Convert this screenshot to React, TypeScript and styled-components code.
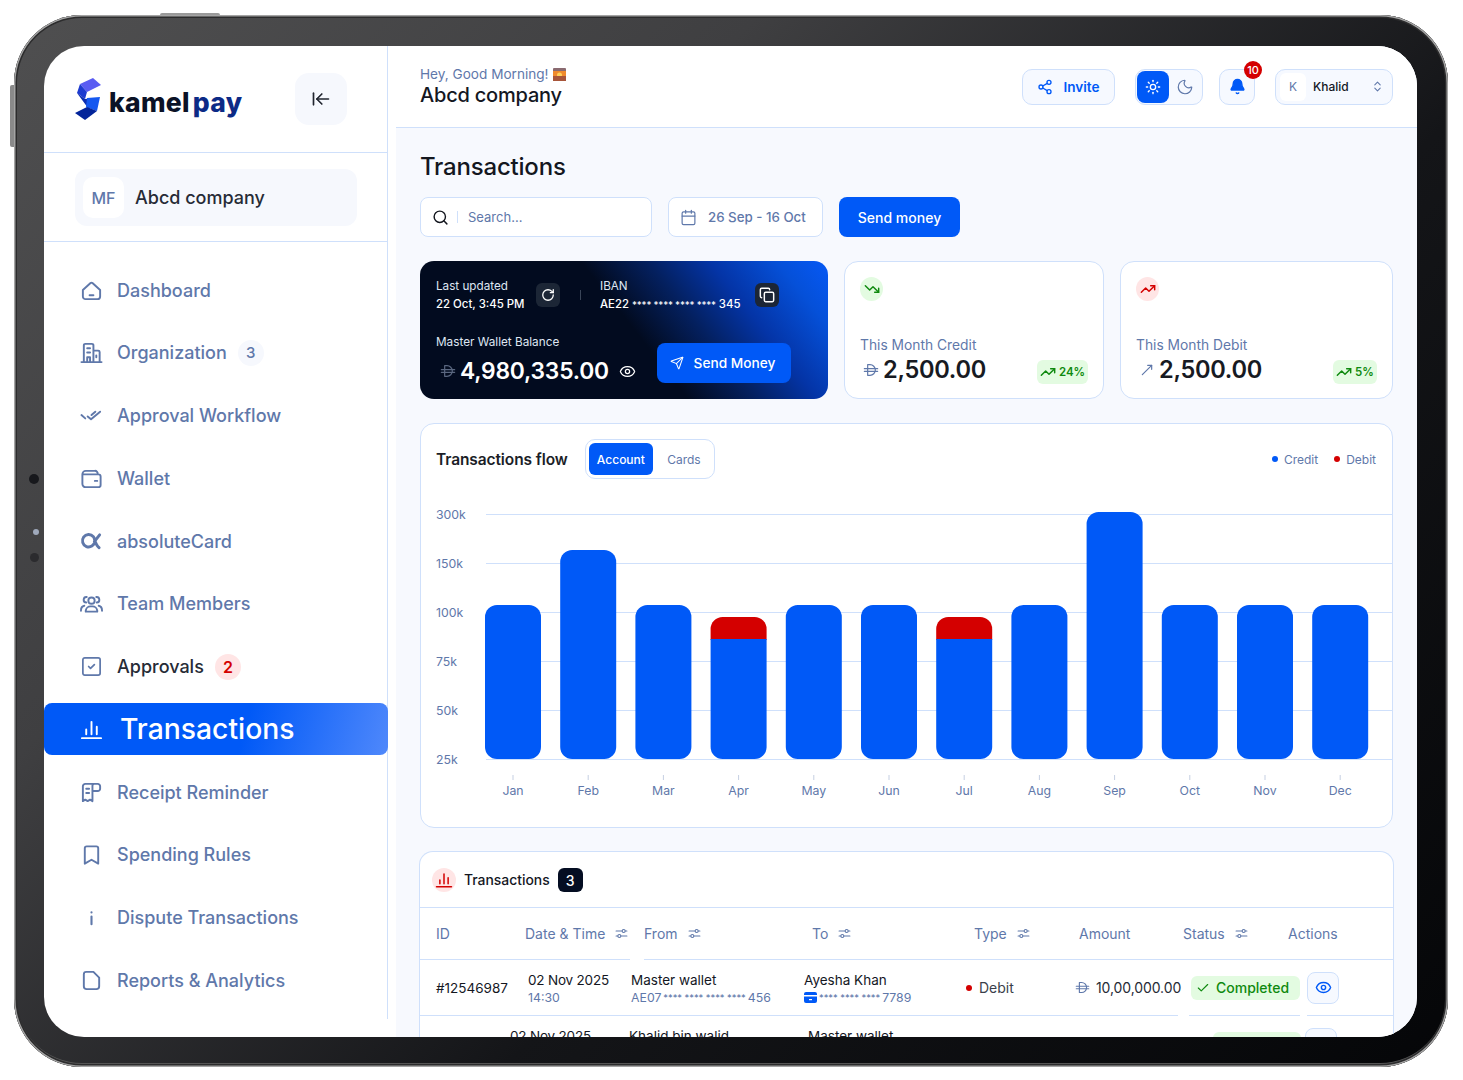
import React from "react";
import styled, { createGlobalStyle } from "styled-components";
import {
  ArrowLeftToLine,
  Bell,
  Bookmark,
  Calendar,
  Check,
  ChevronsUpDown,
  Copy,
  Eye,
  Moon,
  MoveUpRight,
  RotateCw,
  Search,
  Send,
  Share2,
  SquareCheck,
  Sun,
  TrendingDown,
  TrendingUp,
} from "lucide-react";

const muted = "#5f78aa";
const ink = "#14171f";
const blue = "#0059f7";
const red = "#d40000";
const green = "#0f8a0f";
const line = "#cfe0fb";

const GlobalStyle = createGlobalStyle`
  html, body { margin: 0; background: #fff; }
  * { box-sizing: border-box; }
  body { font-family: Inter, "Liberation Sans", sans-serif; color: ${ink}; }
`;

const Page = styled.div`
  width: 1463px;
  height: 1080px;
  padding: 15px 15px 13px 14px;
  overflow: hidden;
`;

const Device = styled.div`
  position: relative;
  width: 1434px;
  height: 1052px;
  padding: 31px 31px 30px 30px;
  border-radius: 68px;
  background: linear-gradient(135deg, #4f4f50 0%, #3f3f41 30%, #141518 62%, #050608 100%);
  box-shadow: inset 0 0 0 1.5px #a4a4a4, inset 0 0 0 3px #2c2c2d, inset 0 -2px 0 2px #555;
`;

const SideKey = styled.span`
  position: absolute;
  left: -4px;
  top: 70px;
  width: 4px;
  height: 62px;
  border-radius: 2px 0 0 2px;
  background: #8a8a8a;
`;

const TopKey = styled.span`
  position: absolute;
  left: 146px;
  top: -2px;
  width: 60px;
  height: 2px;
  border-radius: 2px 2px 0 0;
  background: #9a9a9a;
`;

const Sensor = styled.span<{ $y: number; $size: number; $color: string }>`
  position: absolute;
  left: ${(p) => 20 - p.$size / 2 + (p.$size < 7 ? 2 : 0)}px;
  top: ${(p) => p.$y}px;
  width: ${(p) => p.$size}px;
  height: ${(p) => p.$size}px;
  border-radius: 50%;
  background: ${(p) => p.$color};
`;

const Screen = styled.div`
  display: flex;
  align-items: flex-start;
  width: 1373px;
  height: 991px;
  border-radius: 40px;
  overflow: hidden;
  background: #fff;
`;

const Sidebar = styled.aside`
  flex: none;
  width: 344px;
  height: 973px;
  border-right: 1px solid ${line};
`;

const LogoRow = styled.div`
  display: flex;
  align-items: center;
  justify-content: space-between;
  height: 107px;
  padding: 0 40px 0 31px;
  border-bottom: 1px solid ${line};
`;

const Logo = styled.div`
  display: flex;
  align-items: center;
  gap: 8px;
`;

const LogoWord = styled.span`
  margin-top: 6px;
  font-family: Inter, sans-serif;
  font-size: 26.5px;
  font-weight: 800;
  letter-spacing: 0.3px;
  color: #0b1226;
  span { color: #0c2a86; margin-left: 3px; }
`;

const Collapse = styled.button`
  display: flex;
  align-items: center;
  justify-content: center;
  width: 52px;
  height: 52px;
  border: 0;
  border-radius: 14px;
  background: #f6f8fd;
  color: #20242e;
`;

const CompanyRow = styled.div`
  height: 89px;
  padding: 16px 30px 0 31px;
  border-bottom: 1px solid ${line};
`;

const CompanyBox = styled.div`
  display: flex;
  align-items: center;
  gap: 11px;
  height: 57px;
  padding: 0 8px;
  border-radius: 12px;
  background: #f6f8fd;
  font-size: 18px;
  font-weight: 500;
  color: #262b36;
`;

const CompanyMark = styled.span`
  display: flex;
  align-items: center;
  justify-content: center;
  width: 41px;
  height: 41px;
  border-radius: 10px;
  background: #fff;
  font-size: 16px;
  color: ${muted};
`;

const Nav = styled.nav`
  display: flex;
  flex-direction: column;
  gap: 10.75px;
  padding-top: 22px;
`;

const NavItem = styled.div<{ $active?: boolean; $dark?: boolean }>`
  display: flex;
  align-items: center;
  gap: ${(p) => (p.$active ? 17 : 14)}px;
  height: 52px;
  margin-right: ${(p) => (p.$active ? -1 : 0)}px;
  padding-left: 36px;
  border-radius: 8px;
  font-size: ${(p) => (p.$active ? 28.3 : 18)}px;
  font-weight: 500;
  color: ${(p) => (p.$active ? "#fff" : p.$dark ? "#262b36" : muted)};
  background: ${(p) => (p.$active ? `linear-gradient(105deg, ${blue} 58%, #4f88fb 100%)` : "transparent")};
`;

const NavIcon = styled.span<{ $active?: boolean }>`
  display: flex;
  justify-content: center;
  flex: none;
  width: 23px;
  color: ${(p) => (p.$active ? "#fff" : muted)};
`;

const NavCount = styled.span<{ $alert?: boolean }>`
  display: flex;
  align-items: center;
  justify-content: center;
  width: 26px;
  height: 26px;
  margin-left: -3px;
  border-radius: 50%;
  font-size: ${(p) => (p.$alert ? 16 : 15)}px;
  font-weight: ${(p) => (p.$alert ? 600 : 500)};
  background: ${(p) => (p.$alert ? "#ffe5e5" : "#f6f8fd")};
  color: ${(p) => (p.$alert ? red : muted)};
`;

const Main = styled.main`
  flex: none;
  width: 1021px;
  height: 991px;
  margin-left: 8px;
  overflow: hidden;
  background: #f7f9fe;
`;

const TopBar = styled.header`
  display: flex;
  align-items: center;
  justify-content: space-between;
  height: 82px;
  padding: 0 24px;
  background: #fff;
  border-bottom: 1px solid ${line};
`;

const Greeting = styled.div`
  display: flex;
  align-items: center;
  gap: 4px;
  margin-top: 1px;
  font-size: 13.6px;
  line-height: 17px;
  color: ${muted};
`;

const CompanyTitle = styled.div`
  font-size: 20px;
  font-weight: 500;
  line-height: 25px;
  letter-spacing: -0.2px;
`;

const TopActions = styled.div`
  display: flex;
  align-items: center;
`;

const Pill = styled.div<{ $gap: number; $width: number }>`
  position: relative;
  display: flex;
  align-items: center;
  justify-content: center;
  width: ${(p) => p.$width}px;
  height: 36px;
  margin-left: ${(p) => p.$gap}px;
  border: 1px solid ${line};
  border-radius: 10px;
  background: #f6f9ff;
`;

const InviteLabel = styled.span`
  margin-left: 10px;
  font-size: 13.6px;
  font-weight: 600;
  color: ${blue};
`;

const ThemeOn = styled.span`
  display: flex;
  align-items: center;
  justify-content: center;
  width: 32px;
  height: 32px;
  border-radius: 8px;
  background: ${blue};
  color: #fff;
`;

const ThemeOff = styled.span`
  display: flex;
  align-items: center;
  justify-content: center;
  width: 32px;
  color: ${muted};
`;

const BellBadge = styled.span`
  position: absolute;
  top: -9px;
  right: -8px;
  display: flex;
  align-items: center;
  justify-content: center;
  width: 18px;
  height: 18px;
  border-radius: 50%;
  background: ${red};
  color: #fff;
  font-size: 11px;
  font-weight: 500;
`;

const UserMark = styled.span`
  display: flex;
  align-items: center;
  justify-content: center;
  width: 26px;
  height: 28px;
  margin-left: 4px;
  border-radius: 6px;
  background: #fff;
  font-size: 12px;
  color: ${muted};
`;

const UserName = styled.span`
  flex: 1;
  margin-left: 7px;
  font-size: 12px;
  font-weight: 500;
`;

const UserChevron = styled.span`
  display: flex;
  margin-right: 8px;
  color: ${muted};
`;

const Content = styled.div`
  padding: 24px 24px 0;
`;

const PageTitle = styled.h1`
  margin: 0 0 15px;
  font-size: 24px;
  font-weight: 500;
  line-height: 30px;
  letter-spacing: -0.2px;
`;

const Toolbar = styled.div`
  display: flex;
  gap: 16px;
  margin-bottom: 24px;
`;

const SearchBox = styled.div`
  display: flex;
  align-items: center;
  width: 232px;
  height: 40px;
  padding-left: 11px;
  border: 1px solid ${line};
  border-radius: 8px;
  background: #fff;
  font-size: 13px;
  color: ${muted};
`;

const SearchDivider = styled.span`
  width: 1px;
  height: 12px;
  margin: 0 10px 0 8px;
  background: ${line};
`;

const DateBox = styled.div`
  display: flex;
  align-items: center;
  gap: 11px;
  width: 155px;
  height: 40px;
  padding-left: 11px;
  border: 1px solid ${line};
  border-radius: 8px;
  background: #fff;
  font-size: 13.3px;
  font-weight: 500;
  color: ${muted};
`;

const SendButton = styled.button`
  width: 121px;
  height: 40px;
  border: 0;
  border-radius: 8px;
  background: ${blue};
  color: #fff;
  font: 500 14px Inter, sans-serif;
`;

const StatsRow = styled.section`
  display: grid;
  grid-template-columns: 408px 260px 273px;
  gap: 16px;
  margin-bottom: 24px;
`;

const WalletCard = styled.div`
  height: 138px;
  padding: 16px;
  border-radius: 14px;
  color: #fff;
  background: linear-gradient(52deg, #020b1f 0%, #020b1f 52%, #04205f 65%, #0434a6 77%, #0550d8 90%, #0659f5 100%);
`;

const WalletTop = styled.div`
  display: flex;
  align-items: center;
  height: 36px;
  margin-bottom: 21px;
`;

const WalletMeta = styled.div<{ $width: number }>`
  width: ${(p) => p.$width}px;
  font-size: 11.7px;
  line-height: 18px;
  color: #dfe6f2;
  b { display: block; font-size: 11.4px; font-weight: 500; color: #fff; white-space: nowrap; }
  i { font-style: normal; font-size: 9.6px; letter-spacing: -0.2px; }
`;

const SquareButton = styled.span`
  display: flex;
  align-items: center;
  justify-content: center;
  flex: none;
  width: 24px;
  height: 24px;
  border-radius: 6px;
  background: #1c2636;
  color: #fff;
`;

const WalletDivider = styled.span`
  width: 1px;
  height: 10px;
  margin: 0 19px 0 20px;
  background: #3a4558;
`;

const WalletBottom = styled.div`
  display: flex;
  align-items: flex-end;
  justify-content: space-between;
  padding-right: 21px;
`;

const WalletLabel = styled.div`
  font-size: 11.75px;
  line-height: 16px;
  color: #dfe6f2;
`;

const WalletAmount = styled.div`
  display: flex;
  align-items: center;
  gap: 4px;
  margin: 5px 0 0 4px;
  font-size: 22.8px;
  line-height: 32px;
  font-weight: 600;
  letter-spacing: -0.2px;
`;

const WalletSend = styled.span`
  display: flex;
  align-items: center;
  justify-content: center;
  gap: 10px;
  width: 134px;
  height: 40px;
  margin-bottom: 4px;
  padding-right: 3px;
  border-radius: 8px;
  background: ${blue};
  font-size: 13.7px;
  font-weight: 500;
`;

const StatCard = styled.div`
  height: 138px;
  padding: 15px 15px 0;
  border: 1px solid ${line};
  border-radius: 14px;
  background: #fff;
`;

const StatIcon = styled.span<{ $bg: string; $color: string }>`
  display: flex;
  align-items: center;
  justify-content: center;
  width: 23px;
  height: 24px;
  border-radius: 50%;
  background: ${(p) => p.$bg};
  color: ${(p) => p.$color};
`;

const StatLabel = styled.div`
  margin-top: 35px;
  font-size: 13.8px;
  line-height: 18px;
  color: ${muted};
`;

const StatBottom = styled.div`
  display: flex;
  align-items: center;
  justify-content: space-between;
`;

const StatAmount = styled.div`
  display: flex;
  align-items: center;
  gap: 4px;
  margin-left: 3px;
  font-size: 23.6px;
  line-height: 31px;
  font-weight: 600;
  letter-spacing: -0.3px;
  color: #171a22;
`;

const TrendPill = styled.span<{ $width: number }>`
  display: flex;
  align-items: center;
  justify-content: center;
  gap: 3px;
  width: ${(p) => p.$width}px;
  height: 24px;
  margin-top: 5px;
  border-radius: 6px;
  background: #e3fbe1;
  color: ${green};
  font-size: 11.5px;
  font-weight: 600;
`;

const ChartCard = styled.section`
  height: 405px;
  margin-bottom: 23px;
  border: 1px solid ${line};
  border-radius: 14px;
  background: #fff;
`;

const ChartHead = styled.div`
  display: flex;
  align-items: center;
  height: 70px;
  padding: 0 16px 0 15px;
`;

const CardTitle = styled.h2`
  margin: 0 17px 0 0;
  font-size: 15.5px;
  font-weight: 600;
  letter-spacing: -0.1px;
  color: #1b1e27;
`;

const Tabs = styled.div`
  display: flex;
  align-items: center;
  width: 130px;
  height: 40px;
  padding: 0 3px;
  border: 1px solid ${line};
  border-radius: 10px;
`;

const Tab = styled.span<{ $on?: boolean }>`
  display: flex;
  align-items: center;
  justify-content: center;
  width: ${(p) => (p.$on ? 65 : 58)}px;
  height: 32px;
  padding-left: ${(p) => (p.$on ? 0 : 4)}px;
  border-radius: 6px;
  font-size: 12px;
  font-weight: ${(p) => (p.$on ? 500 : 400)};
  background: ${(p) => (p.$on ? blue : "transparent")};
  color: ${(p) => (p.$on ? "#fff" : muted)};
`;

const Legend = styled.div`
  display: flex;
  gap: 16px;
  margin-left: auto;
  font-size: 12px;
  color: ${muted};
`;

const LegendItem = styled.span<{ $color: string }>`
  display: flex;
  align-items: center;
  gap: 6px;
  &::before {
    content: "";
    width: 6px;
    height: 6px;
    border-radius: 50%;
    background: ${(p) => p.$color};
  }
`;

const ChartSvg = styled.svg`
  display: block;
  width: 971px;
  height: 325px;
  text { font-family: Inter, sans-serif; font-size: 12.3px; fill: ${muted}; }
`;

const TableCard = styled.section`
  margin-left: -1px;
  margin-right: -1px;
  border: 1px solid ${line};
  border-bottom: 0;
  border-radius: 14px 14px 0 0;
  background: #fff;
`;

const TableHead = styled.div`
  display: flex;
  align-items: center;
  gap: 8px;
  height: 56px;
  padding: 1px 0 0 12px;
  border-bottom: 1px solid ${line};
`;

const TableIcon = styled.span`
  display: flex;
  align-items: center;
  justify-content: center;
  width: 24px;
  height: 24px;
  border-radius: 50%;
  background: #ffe5e5;
  color: ${red};
`;

const TableTitle = styled.h3`
  margin: 0;
  font-size: 13.9px;
  font-weight: 500;
`;

const CountChip = styled.span`
  display: flex;
  align-items: center;
  justify-content: center;
  width: 25px;
  height: 24px;
  border-radius: 6px;
  background: #040d22;
  color: #fff;
  font-size: 14px;
  font-weight: 500;
`;

const Row = styled.div<{ $cols: string; $height: number }>`
  position: relative;
  display: grid;
  grid-template-columns: ${(p) => p.$cols};
  align-items: center;
  height: ${(p) => p.$height}px;
  padding-left: 16px;
  border-bottom: 1px solid ${line};
  font-size: 13.5px;
`;

const Notch = styled.span<{ $left: number; $width: number }>`
  position: absolute;
  left: ${(p) => p.$left}px;
  bottom: -1px;
  width: ${(p) => p.$width}px;
  height: 1px;
  background: #fff;
`;

const HeadCell = styled.div`
  display: flex;
  align-items: center;
  gap: 10px;
  font-size: 14px;
  color: ${muted};
`;

const TwoLine = styled.div<{ $tight?: boolean }>`
  align-self: start;
  margin-top: 11px;
  line-height: 18px;
  white-space: nowrap;
  letter-spacing: ${(p) => (p.$tight ? -0.2 : 0)}px;
  small {
    display: flex;
    align-items: center;
    gap: 2px;
    font-size: 12.3px;
    line-height: 17px;
    letter-spacing: 0;
    color: ${muted};
    i { font-style: normal; font-size: 9.3px; }
  }
`;

const TypeCell = styled.div`
  display: flex;
  align-items: center;
  gap: 7px;
  font-size: 14px;
  color: #3a3f4b;
  &::before {
    content: "";
    width: 6px;
    height: 6px;
    border-radius: 50%;
    background: ${red};
  }
`;

const AmountCell = styled.div`
  display: flex;
  align-items: center;
  gap: 6px;
  font-size: 14px;
  letter-spacing: -0.1px;
  color: #262b36;
`;

const StatusPill = styled.span<{ $width: number }>`
  display: flex;
  align-items: center;
  gap: 6px;
  width: ${(p) => p.$width}px;
  height: 24px;
  padding-left: 5px;
  border-radius: 6px;
  background: #e3fbe1;
  color: ${green};
  font-size: 14px;
  font-weight: 500;
`;

const ViewButton = styled.span`
  display: flex;
  align-items: center;
  justify-content: center;
  width: 32px;
  height: 32px;
  border: 1px solid ${line};
  border-radius: 8px;
  background: #f6f9ff;
  color: ${blue};
`;

const Glyph = styled.svg.attrs<{ $size?: number; $weight?: number }>((p) => ({
  viewBox: "0 0 24 24",
  fill: "none",
  stroke: "currentColor",
  strokeWidth: p.$weight ?? 2,
  strokeLinecap: "round",
  strokeLinejoin: "round",
}))<{ $size?: number; $weight?: number }>`
  display: block;
  flex: none;
  width: ${(p) => p.$size ?? 23}px;
  height: ${(p) => p.$size ?? 23}px;
`;

const Dirham = ({ size = 16, color = muted }: { size?: number; color?: string }) => (
  <Glyph $size={size} $weight={1.8} style={{ color }}>
    <path d="M7 4v16M7 4h3.5a8 8 0 0 1 0 16H7M2 10h20M2 14h20" />
  </Glyph>
);

const BarsIcon = ({ size = 23 }: { size?: number }) => (
  <Glyph $size={size}>
    <path d="M2 21h20M6.5 17v-5M12 17V4M17.5 17v-8" />
  </Glyph>
);

const FilterIcon = () => (
  <Glyph $size={13}>
    <path d="M2 7.5h11M19 7.5h3M2 16.5h3M11 16.5h11" />
    <circle cx="16" cy="7.5" r="2.8" />
    <circle cx="8" cy="16.5" r="2.8" />
  </Glyph>
);

const navIcons: Record<string, React.ReactNode> = {
  home: (
    <Glyph>
      <path d="M3 11.5 11 4.2a1.6 1.6 0 0 1 2 0l8 7.3v6.7a2.8 2.8 0 0 1-2.8 2.8H5.8A2.8 2.8 0 0 1 3 18.2zM10 17h4" />
    </Glyph>
  ),
  org: (
    <Glyph>
      <path d="M1.5 22h21M4 22V4.5A1.5 1.5 0 0 1 5.5 3h7A1.5 1.5 0 0 1 14 4.5V22M14 10h5a1.5 1.5 0 0 1 1.5 1.5V22M7.5 7.5h3M7.5 12h3M7.5 22v-5h3v5M17 15v2" />
    </Glyph>
  ),
  approve: (
    <Glyph>
      <path d="M1.5 11.5l4 3.5M8 13l3.5 3L21 8M12 11.5 16 8" />
    </Glyph>
  ),
  wallet: (
    <Glyph>
      <path d="M2.5 7.5v10.2A3.3 3.3 0 0 0 5.8 21h13.4a2.3 2.3 0 0 0 2.3-2.3V10a2.3 2.3 0 0 0-2.3-2.3H2.5zM2.5 7.5A3.5 3.5 0 0 1 6 4h9.5a3 3 0 0 1 3 3.5M15.5 14.5H18" />
    </Glyph>
  ),
  alpha: (
    <Glyph $weight={3}>
      <path d="M15.5 12a6.5 6.500 0 1 1-1.5-5c1.4 1.8 1.8 8.500 6 11.500M20.500 5 15 12" />
    </Glyph>
  ),
  team: (
    <Glyph>
      <circle cx="12" cy="9" r="3.3" />
      <path d="M6 20.5v-1a5 5 0 0 1 5-4.5h2a5 5 0 0 1 5 4.5v1zM6.5 11A2.7 2.7 0 0 1 7 5.2M17.5 11A2.7 2.7 0 0 0 17 5.2M1 19.5c0-2.500 1.3-4.800 3.500-5.200M23 19.500c0-2.500-1.300-4.800-3.500-5.200" />
    </Glyph>
  ),
  check: <SquareCheck size={23} strokeWidth={1.8} />,
  receipt: (
    <Glyph>
      <path d="M15 3H5.5A2.5 2.5 0 0 0 3 5.5V21l2.5-1.5L8 21l2.5-1.5L13 21V5c0-1 1-2 2-2h3.5A2.500 2.500 0 0 1 21 5.500V8a2.500 2.500 0 0 1-2.500 2.500H14M6.500 8h3M6.500 12.500h3" />
    </Glyph>
  ),
  rule: <Bookmark size={24} strokeWidth={2} />,
  info: (
    <Glyph $weight={2.2}>
      <path d="M12 6.5v.3M12 11v8" />
    </Glyph>
  ),
  report: (
    <Glyph>
      <path d="M6.5 3H14l6 6v9a3 3 0 0 1-3 3H7a3 3 0 0 1-3-3V5.5A2.5 2.5 0 0 1 6.5 3z" />
    </Glyph>
  ),
};

const navRows = [
  { label: "Dashboard", icon: "home" },
  { label: "Organization", icon: "org", count: "3" },
  { label: "Approval Workflow", icon: "approve" },
  { label: "Wallet", icon: "wallet" },
  { label: "absoluteCard", icon: "alpha" },
  { label: "Team Members", icon: "team" },
  { label: "Approvals", icon: "check", count: "2", alert: true },
  { label: "Transactions", icon: "bars", active: true },
  { label: "Receipt Reminder", icon: "receipt" },
  { label: "Spending Rules", icon: "rule" },
  { label: "Dispute Transactions", icon: "info" },
  { label: "Reports & Analytics", icon: "report" },
];

const months = ["Jan", "Feb", "Mar", "Apr", "May", "Jun", "Jul", "Aug", "Sep", "Oct", "Nov", "Dec"];
const barTops = [605, 550, 605, 639, 605, 605, 639, 605, 512, 605, 605, 605];
const debitTops: Record<number, number> = { 3: 617, 6: 617 };
const yLabels = ["300k", "150k", "100k", "75k", "50k", "25k"];

const barX = (i: number) => 485 + i * 75.2;
const roundedTop = (x: number, top: number, bottom: number, r: number, rb: number) =>
  `M${x} ${bottom - rb}V${top + r}a${r} ${r} 0 0 1 ${r}-${r}h${56 - 2 * r}a${r} ${r} 0 0 1 ${r} ${r}V${bottom - rb}` +
  (rb ? `a${rb} ${rb} 0 0 1-${rb} ${rb}h-${56 - 2 * rb}a${rb} ${rb} 0 0 1-${rb}-${rb}z` : "z");

const FlowChart = () => (
  <ChartSvg viewBox="421 494 971 325">
    {yLabels.map((label, i) => (
      <g key={label}>
        <line x1="486" x2="1392" y1={514.5 + i * 49} y2={514.5 + i * 49} stroke={line} />
        <text x="436" y={519 + i * 49}>
          {label}
        </text>
      </g>
    ))}
    {months.map((month, i) => {
      const x = barX(i);
      const debit = debitTops[i];
      return (
        <g key={month}>
          {debit !== undefined && <path d={roundedTop(x, debit, debit + 23, 12, 0)} fill={red} />}
          {debit !== undefined ? (
            <path d={`M${x} ${barTops[i]}h56V747a12 12 0 0 1-12 12h-32a12 12 0 0 1-12-12z`} fill={blue} />
          ) : (
            <path d={roundedTop(x, barTops[i], 759, 12, 12)} fill={blue} />
          )}
          <line x1={x + 28} x2={x + 28} y1="775" y2="780" stroke="#c5cfe2" />
          <text x={x + 28} y="794.500" textAnchor="middle">
            {month}
          </text>
        </g>
      );
    })}
  </ChartSvg>
);

const headCells = [
  { label: "ID" },
  { label: "Date & Time", filter: true },
  { label: "From", filter: true },
  { label: "To", filter: true },
  { label: "Type", filter: true },
  { label: "Amount" },
  { label: "Status", filter: true },
  { label: "Actions" },
];

export default function App() {
  return (
    <Page>
      <GlobalStyle />
      <Device>
        <SideKey />
        <TopKey />
        <Sensor $y={459} $size={10} $color="#17181c" />
        <Sensor $y={514} $size={6} $color="#9fa9bb" />
        <Sensor $y={538} $size={9} $color="#2b2b2e" />
        <Screen>
          <Sidebar>
            <LogoRow>
              <Logo>
                <svg width="26" height="42" viewBox="0 0 26 42">
                  <polygon points="5,6 18,0 26,7 12,14" fill="#5a5cf2" />
                  <polygon points="5,6 12,14 10,21 2,15" fill="#1d3bd0" />
                  <polygon points="2,15 10,21 24,20 13,30" fill="#0d2eb0" />
                  <polygon points="12,20 25,19 22,33 11,29" fill="#1558f0" />
                  <polygon points="0,35 12,29 22,33 10,42" fill="#03249a" />
                </svg>
                <LogoWord>
                  kamel<span>pay</span>
                </LogoWord>
              </Logo>
              <Collapse>
                <ArrowLeftToLine size={20} strokeWidth={2} />
              </Collapse>
            </LogoRow>
            <CompanyRow>
              <CompanyBox>
                <CompanyMark>MF</CompanyMark>
                Abcd company
              </CompanyBox>
            </CompanyRow>
            <Nav>
              {navRows.map((row) => (
                <NavItem key={row.label} $active={row.active} $dark={row.alert}>
                  <NavIcon $active={row.active}>{row.icon === "bars" ? <BarsIcon /> : navIcons[row.icon]}</NavIcon>
                  {row.label}
                  {row.count && <NavCount $alert={row.alert}>{row.count}</NavCount>}
                </NavItem>
              ))}
            </Nav>
          </Sidebar>

          <Main>
            <TopBar>
              <div>
                <Greeting>
                  Hey, Good Morning!
                  <svg width="13" height="13" viewBox="0 0 13 13">
                    <rect width="13" height="13" rx="1" fill="#8a6a70" />
                    <rect y="3" width="13" height="5" fill="#f08a2c" />
                    <circle cx="6.5" cy="7" r="2.5" fill="#ffd05a" />
                    <rect y="8" width="13" height="5" fill="#a8553a" />
                  </svg>
                </Greeting>
                <CompanyTitle>Abcd company</CompanyTitle>
              </div>
              <TopActions>
                <Pill $gap={0} $width={93}>
                  <Share2 size={16} color={blue} strokeWidth={2} />
                  <InviteLabel>Invite</InviteLabel>
                </Pill>
                <Pill $gap={20} $width={68}>
                  <ThemeOn>
                    <Sun size={16} strokeWidth={2} />
                  </ThemeOn>
                  <ThemeOff>
                    <Moon size={18} strokeWidth={1.6} />
                  </ThemeOff>
                </Pill>
                <Pill $gap={16} $width={36}>
                  <Bell size={17} color={blue} fill={blue} strokeWidth={2} />
                  <BellBadge>10</BellBadge>
                </Pill>
                <Pill $gap={20} $width={118}>
                  <UserMark>K</UserMark>
                  <UserName>Khalid</UserName>
                  <UserChevron>
                    <ChevronsUpDown size={13} strokeWidth={2} />
                  </UserChevron>
                </Pill>
              </TopActions>
            </TopBar>

            <Content>
              <PageTitle>Transactions</PageTitle>
              <Toolbar>
                <SearchBox>
                  <Search size={17} color="#14171f" strokeWidth={2} />
                  <SearchDivider />
                  Search...
                </SearchBox>
                <DateBox>
                  <Calendar size={17} strokeWidth={1.7} />
                  26 Sep - 16 Oct
                </DateBox>
                <SendButton>Send money</SendButton>
              </Toolbar>

              <StatsRow>
                <WalletCard>
                  <WalletTop>
                    <WalletMeta $width={100}>
                      Last updated
                      <b>22 Oct, 3:45 PM</b>
                    </WalletMeta>
                    <SquareButton>
                      <RotateCw size={14} strokeWidth={2.2} />
                    </SquareButton>
                    <WalletDivider />
                    <WalletMeta $width={155}>
                      IBAN
                      <b>
                        AE22 <i>**** **** **** ****</i> 345
                      </b>
                    </WalletMeta>
                    <SquareButton>
                      <Copy size={16} strokeWidth={2.2} />
                    </SquareButton>
                  </WalletTop>
                  <WalletBottom>
                    <div>
                      <WalletLabel>Master Wallet Balance</WalletLabel>
                      <WalletAmount>
                        <Dirham size={16} color="#5a6780" />
                        4,980,335.00
                        <Eye size={17} strokeWidth={1.8} style={{ marginLeft: 6 }} />
                      </WalletAmount>
                    </div>
                    <WalletSend>
                      <Send size={14} strokeWidth={1.8} />
                      Send Money
                    </WalletSend>
                  </WalletBottom>
                </WalletCard>

                <StatCard>
                  <StatIcon $bg="#e3fbe1" $color={green}>
                    <TrendingDown size={16} strokeWidth={2.2} />
                  </StatIcon>
                  <StatLabel>This Month Credit</StatLabel>
                  <StatBottom>
                    <StatAmount>
                      <Dirham size={16} />
                      2,500.00
                    </StatAmount>
                    <TrendPill $width={51}>
                      <TrendingUp size={16} strokeWidth={2.2} />
                      24%
                    </TrendPill>
                  </StatBottom>
                </StatCard>

                <StatCard>
                  <StatIcon $bg="#ffe5e5" $color={red}>
                    <TrendingUp size={16} strokeWidth={2.2} />
                  </StatIcon>
                  <StatLabel>This Month Debit</StatLabel>
                  <StatBottom>
                    <StatAmount>
                      <MoveUpRight size={16} color={muted} strokeWidth={1.8} />
                      2,500.00
                    </StatAmount>
                    <TrendPill $width={44}>
                      <TrendingUp size={16} strokeWidth={2.2} />
                      5%
                    </TrendPill>
                  </StatBottom>
                </StatCard>
              </StatsRow>

              <ChartCard>
                <ChartHead>
                  <CardTitle>Transactions flow</CardTitle>
                  <Tabs>
                    <Tab $on>Account</Tab>
                    <Tab>Cards</Tab>
                  </Tabs>
                  <Legend>
                    <LegendItem $color={blue}>Credit</LegendItem>
                    <LegendItem $color={red}>Debit</LegendItem>
                  </Legend>
                </ChartHead>
                <FlowChart />
              </ChartCard>

              <TableCard>
                <TableHead>
                  <TableIcon>
                    <BarsIcon size={18} />
                  </TableIcon>
                  <TableTitle>Transactions</TableTitle>
                  <CountChip>3</CountChip>
                </TableHead>
                <Row $cols="89px 119px 168px 162px 105px 104px 105px auto" $height={52}>
                  {headCells.map((cell) => (
                    <HeadCell key={cell.label}>
                      {cell.label}
                      {cell.filter && <FilterIcon />}
                    </HeadCell>
                  ))}
                  <Notch $left={210} $width={14} />
                </Row>
                <Row $cols="92px 103px 173px 162px 109px 116px 116px auto" $height={56}>
                  <div>#12546987</div>
                  <TwoLine $tight>
                    02 Nov 2025
                    <small>14:30</small>
                  </TwoLine>
                  <TwoLine>
                    Master wallet
                    <small>
                      AE07 <i>**** **** **** ****</i> 456
                    </small>
                  </TwoLine>
                  <TwoLine>
                    Ayesha Khan
                    <small>
                      <svg width="13" height="11" viewBox="0 0 13 11">
                        <rect width="13" height="11" rx="2" fill={blue} />
                        <rect y="3" width="13" height="1.5" fill="#fff" />
                        <rect x="5" y="7" width="3" height="1.2" fill="#fff" />
                      </svg>
                      <i>**** **** ****</i> 7789
                    </small>
                  </TwoLine>
                  <TypeCell>Debit</TypeCell>
                  <AmountCell>
                    <Dirham size={15} />
                    10,00,000.00
                  </AmountCell>
                  <StatusPill $width={109}>
                    <Check size={14} strokeWidth={2} />
                    Completed
                  </StatusPill>
                  <ViewButton>
                    <Eye size={17} strokeWidth={2} />
                  </ViewButton>
                  <Notch $left={758} $width={11} />
                  <Notch $left={880} $width={7} />
                </Row>
                <Row $cols="74px 119px 179px 405px 92px auto" $height={56}>
                  <div />
                  <TwoLine $tight>02 Nov 2025</TwoLine>
                  <TwoLine>Khalid bin walid</TwoLine>
                  <TwoLine>Master wallet</TwoLine>
                  <StatusPill $width={88}>
                    <Check size={14} strokeWidth={2} />
                  </StatusPill>
                  <ViewButton>
                    <Eye size={17} strokeWidth={2} />
                  </ViewButton>
                </Row>
              </TableCard>
            </Content>
          </Main>
        </Screen>
      </Device>
    </Page>
  );
}
